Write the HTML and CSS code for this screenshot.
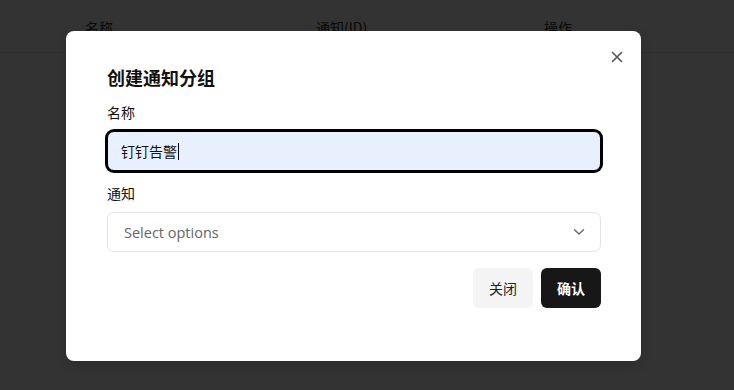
FILE: index.html
```html
<!DOCTYPE html>
<html lang="zh-CN">
<head>
<meta charset="utf-8">
<title>创建通知分组</title>
<link rel="stylesheet" href="styles.css">
</head>
<body>
<div class="page">
  <div class="table-head">
    <div class="th th-name">名称</div>
    <div class="th th-notify">通知(ID)</div>
    <div class="th th-op">操作</div>
  </div>
</div>
<div class="overlay"></div>
<div class="modal">
  <button class="close" aria-label="关闭">
    <svg width="12" height="12" viewBox="0 0 12 12"><path d="M1.5 1.5 L10.5 10.5 M10.5 1.5 L1.5 10.5" stroke="#555" stroke-width="1.6" stroke-linecap="round" fill="none"/></svg>
  </button>
  <h2 class="title">创建通知分组</h2>
  <div class="field">
    <label class="label">名称</label>
    <div class="input focused"><span class="value">钉钉告警</span><span class="caret"></span></div>
  </div>
  <div class="field field-2">
    <label class="label">通知</label>
    <div class="select">
      <span class="placeholder">Select options</span>
      <svg class="chev" width="12" height="8" viewBox="0 0 12 8"><path d="M1.5 1.8 L6 6 L10.5 1.8" stroke="#666" stroke-width="1.4" fill="none" stroke-linecap="round" stroke-linejoin="round"/></svg>
    </div>
  </div>
  <div class="footer">
    <button class="btn btn-ghost">关闭</button>
    <button class="btn btn-primary">确认</button>
  </div>
</div>
</body>
</html>
```
FILE: styles.css
```css
* { box-sizing: border-box; }
html, body { margin: 0; padding: 0; }
body {
  width: 734px;
  height: 390px;
  overflow: hidden;
  background: #fff;
  font-family: "Noto Sans", "Noto Sans CJK SC", sans-serif;
  position: relative;
}
.page { height: 390px; }
.table-head {
  display: flex;
  height: 53px;
  align-items: center;
  border-bottom: 1px solid #e6e6e6;
  padding-left: 85px;
  padding-top: 2px;
  font-size: 14px;
  color: #333;
  font-family: "Noto Sans CJK SC", sans-serif;
}
.th-name { width: 231px; }
.th-notify { width: 228px; }
.overlay {
  position: absolute;
  inset: 0;
  background: rgba(0, 0, 0, 0.8);
}
.modal {
  position: absolute;
  left: 66px;
  top: 31px;
  width: 575px;
  background: #fff;
  border-radius: 8px;
  padding: 32px 40px 53px 41px;
  box-shadow: 0 4px 12px rgba(0,0,0,0.15);
  font-family: "Noto Sans CJK SC", sans-serif;
}
.close {
  position: absolute;
  right: 18px;
  top: 20px;
  width: 12px;
  height: 12px;
  padding: 0;
  border: 0;
  background: transparent;
  display: flex;
}
.title {
  margin: 0;
  font-size: 18px;
  line-height: 28px;
  font-weight: 700;
  color: #111;
}
.field { margin-top: 11px; display: flex; flex-direction: column; }
.field-2 { margin-top: 12px; }
.label {
  font-size: 14px;
  line-height: 20px;
  color: #111;
  margin-bottom: 9px;
}
.input {
  height: 40px;
  border-radius: 7px;
  background: #e8f0fe;
  border: 1px solid #000;
  box-shadow: 0 0 0 2px #000;
  display: flex;
  align-items: center;
  padding-left: 13px;
  font-size: 14px;
  color: #111;
}
.caret {
  width: 1px;
  height: 17px;
  background: #000;
  margin-left: 1px;
}
.select {
  height: 40px;
  border: 1px solid #e4e4e4;
  border-radius: 7px;
  display: flex;
  align-items: center;
  justify-content: space-between;
  padding: 0 15px 0 16px;
}
.placeholder {
  font-family: "Open Sans", sans-serif;
  font-size: 14.5px;
  color: #666;
}
.footer {
  margin-top: 16px;
  display: flex;
  justify-content: flex-end;
  gap: 8px;
}
.btn {
  width: 60px;
  height: 40px;
  border: 0;
  border-radius: 6px;
  font-family: "Noto Sans CJK SC", sans-serif;
  font-size: 14px;
  padding: 0;
}
.btn-ghost { background: #f4f4f4; color: #222; }
.btn-primary { background: #171717; color: #fff; font-weight: 700; }
```
